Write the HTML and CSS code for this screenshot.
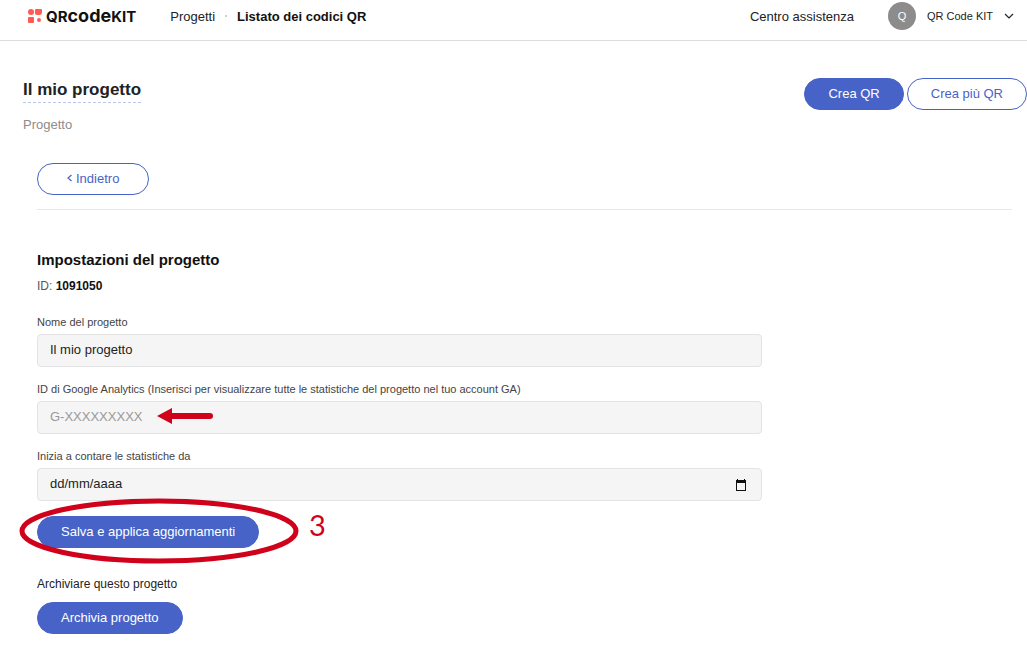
FILE: index.html
```html
<!DOCTYPE html>
<html lang="it">
<head>
  <meta charset="UTF-8">
  <meta name="viewport" content="width=device-width, initial-scale=1">
  <title>Il mio progetto - QRcodeKIT</title>
  <link rel="stylesheet" href="styles.css">
</head>
<body>
  <header class="topbar">
    <a class="logo" href="#">
      <svg width="14" height="14" viewBox="0 0 14 14" fill="#ff5a54">
        <circle cx="3" cy="3" r="3"/>
        <path d="M8 0h5q1 0 1 1v2q0 3-3 3h-2q-2 0-2-2V1q0-1 1-1z"/>
        <rect x="0" y="8" width="6" height="6" rx="1"/>
        <circle cx="11" cy="11" r="2"/>
      </svg>
      <span class="logo-text"><span class="small-caps">QR</span>code<span class="small-caps">KIT</span></span>
    </a>
    <nav class="crumbs">
      <a href="#">Progetti</a>
      <span class="dot"></span>
      <a href="#" class="current">Listato dei codici QR</a>
    </nav>
    <a class="help" href="#">Centro assistenza</a>
    <button class="account" type="button">
      <span class="avatar">Q</span>
      <span>QR Code KIT</span>
      <svg width="10" height="6" viewBox="0 0 10 6" fill="none" stroke="#222" stroke-width="1.2"><path d="M1 1l4 4 4-4"/></svg>
    </button>
  </header>

  <section class="page-head">
    <div>
      <h1>Il mio progetto</h1>
      <p class="type">Progetto</p>
    </div>
    <div class="actions">
      <button class="btn" type="button">Crea QR</button>
      <button class="btn outline" type="button">Crea più QR</button>
    </div>
  </section>

  <main>
    <div class="back">
      <a class="btn outline back-btn" href="#"><svg width="5" height="8" viewBox="0 0 5 8" fill="none" stroke="currentColor" stroke-width="1.2"><path d="M4.500 1L1 4l3.500 3"/></svg>Indietro</a>
    </div>

    <h2>Impostazioni del progetto</h2>
    <p class="project-id">ID: <b>1091050</b></p>

    <form>
      <div class="field">
        <label for="name">Nome del progetto</label>
        <input id="name" type="text" value="Il mio progetto">
      </div>
      <div class="field">
        <label for="ga">ID di Google Analytics (Inserisci per visualizzare tutte le statistiche del progetto nel tuo account GA)</label>
        <input id="ga" type="text" placeholder="G-XXXXXXXXX">
        <svg class="arrow" width="56" height="16" viewBox="0 0 56 16" fill="#d0021b">
          <path d="M0 8L15 0v5h38a3 3 0 0 1 0 6H15v5z"/>
        </svg>
      </div>
      <div class="field">
        <label for="since">Inizia a contare le statistiche da</label>
        <input id="since" class="date" type="text" placeholder="dd/mm/aaaa">
        <button class="calendar" type="button" aria-label="Calendario">
          <svg width="12" height="12" viewBox="0 0 12 12">
            <path d="M2 0h1v1h6V0h1v1h1v11H1V1h1zM2 4v7h8V4z" fill="#111" fill-rule="evenodd"/>
          </svg>
        </button>
      </div>
      <div class="save">
        <button class="btn" type="button">Salva e applica aggiornamenti</button>
        <svg class="ring" width="280" height="66" viewBox="0 0 280 66" fill="none" stroke="#d0021b" stroke-width="5">
          <ellipse cx="140" cy="33" rx="137" ry="30"/>
        </svg>
        <span class="step">3</span>
      </div>
    </form>

    <p class="archive-text">Archiviare questo progetto</p>
    <button class="btn" type="button">Archivia progetto</button>
  </main>
</body>
</html>
```
FILE: styles.css
```css
* {
  box-sizing: border-box;
}
body {
  margin: 0;
  font-family: "Liberation Sans", Arial, sans-serif;
  font-size: 13px;
  color: #222;
  background: #fff;
}
h1, h2, p {
  margin: 0;
}
a {
  color: inherit;
  text-decoration: none;
}
button, input {
  font: inherit;
}
.topbar {
  display: flex;
  align-items: center;
  height: 41px;
  padding: 0 13px 8px 28px;
  border-bottom: 1px solid #ddd;
}
.logo {
  display: flex;
  align-items: center;
  gap: 4px;
  color: #111;
}
.logo-text {
  font-family: Inter, "Liberation Sans", sans-serif;
  font-size: 18px;
  font-weight: 700;
  line-height: 20px;
}
.small-caps {
  font-size: 15px;
}
.crumbs {
  display: flex;
  align-items: center;
  gap: 10px;
  margin-left: 34px;
}
.dot {
  width: 2px;
  height: 2px;
  background: #ccc;
}
.current {
  font-weight: bold;
  color: #111;
}
.help {
  margin-left: auto;
}
.account {
  display: flex;
  align-items: center;
  gap: 11px;
  margin-left: 34px;
  padding: 0;
  border: 0;
  background: none;
  font-size: 11px;
  color: #222;
}
.avatar {
  width: 28px;
  height: 28px;
  border-radius: 50%;
  background: #8c8c8c;
  color: #fff;
  line-height: 28px;
}
.page-head {
  display: flex;
  justify-content: space-between;
  align-items: flex-start;
  padding: 37px 0 0 23px;
}
h1 {
  font-size: 17px;
  line-height: 24px;
  border-bottom: 1px dashed #bcc7f0;
}
.type {
  margin-top: 14px;
  line-height: 16px;
  color: #8c8c8c;
}
.actions {
  display: flex;
  gap: 3px;
}
.btn {
  height: 32px;
  padding: 0 23px 2px;
  border: 1px solid #4763c7;
  border-radius: 16px;
  background: #4763c7;
  color: #fff;
  cursor: pointer;
}
.outline {
  background: #fff;
  color: #4763c7;
}
main {
  padding: 30px 15px 27px 37px;
}
.back {
  padding-bottom: 14px;
  border-bottom: 1px solid #e8e8e8;
}
.back-btn {
  display: inline-flex;
  align-items: center;
  gap: 4px;
  padding: 0 29px 2px;
}
h2 {
  margin-top: 40px;
  font-size: 15px;
  line-height: 20px;
  color: #111;
}
.project-id {
  margin: 8px 0 21px;
  font-size: 12px;
  line-height: 16px;
  color: #555;
}
.project-id b {
  color: #111;
}
form {
  max-width: 725px;
}
.field {
  position: relative;
  margin-bottom: 15px;
}
.field label {
  display: block;
  margin-bottom: 4px;
  font-size: 11px;
  line-height: 15px;
  color: #444;
}
.field input {
  display: block;
  width: 100%;
  height: 33px;
  padding: 0 12px 2px;
  border: 1px solid #e3e3e3;
  border-radius: 4px;
  background: #f5f5f5;
  color: #222;
}
.field input::placeholder {
  color: #999;
  opacity: 1;
}
.field .date::placeholder {
  color: #222;
}
.calendar {
  position: absolute;
  right: 15px;
  bottom: 10px;
  display: flex;
  padding: 0;
  border: 0;
  background: none;
}
.arrow {
  position: absolute;
  left: 120px;
  bottom: 10px;
}
.save {
  position: relative;
  width: fit-content;
}
.ring {
  position: absolute;
  left: -18px;
  top: -18px;
}
.step {
  position: absolute;
  left: 272px;
  top: -8px;
  font-family: Lato, sans-serif;
  font-size: 29px;
  line-height: 34px;
  color: #d0021b;
}
.archive-text {
  margin: 28px 0 10px;
  font-size: 12px;
  line-height: 16px;
}
```
